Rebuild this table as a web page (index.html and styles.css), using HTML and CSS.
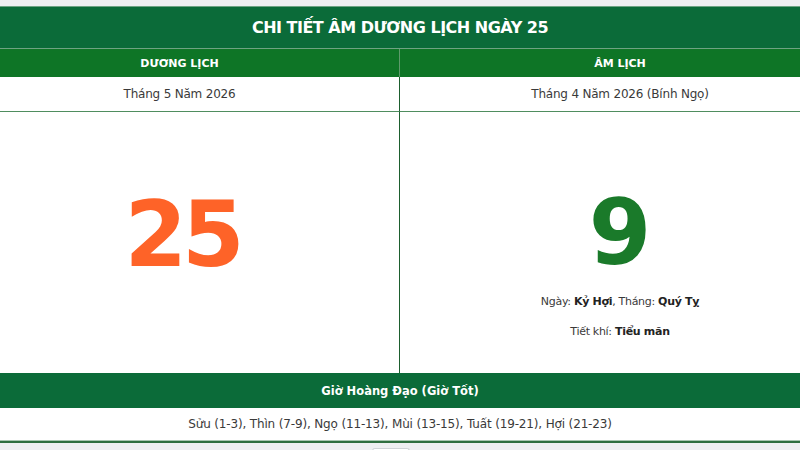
FILE: index.html
```html
<!DOCTYPE html>
<html lang="vi">
<head>
<meta charset="utf-8">
<title>Chi tiết âm dương lịch ngày 25</title>
<link rel="stylesheet" href="styles.css">
</head>
<body>
<div class="page">
  <div class="card">
    <div class="title">CHI TIẾT ÂM DƯƠNG LỊCH NGÀY 25</div>
    <div class="grid">
      <div class="head left">DƯƠNG LỊCH</div>
      <div class="head right">ÂM LỊCH</div>
      <div class="month left">Tháng 5 Năm 2026</div>
      <div class="month right">Tháng 4 Năm 2026 (Bính Ngọ)</div>
      <div class="day left">
        <div class="num solar">25</div>
      </div>
      <div class="day right">
        <div class="num lunar">9</div>
        <div class="info">Ngày: <b>Kỷ Hợi</b>, Tháng: <b>Quý Tỵ</b></div>
        <div class="info">Tiết khí: <b>Tiểu mãn</b></div>
      </div>
    </div>
    <div class="band">Giờ Hoàng Đạo (Giờ Tốt)</div>
    <div class="hours">Sửu (1-3), Thìn (7-9), Ngọ (11-13), Mùi (13-15), Tuất (19-21), Hợi (21-23)</div>
  </div>
  <div class="foot"><span class="btn"></span></div>
</div>
</body>
</html>
```
FILE: styles.css
```css
* { box-sizing: border-box; }
html, body { margin: 0; padding: 0; }
body {
  background: #eeeff1;
  font-family: "DejaVu Sans", Verdana, sans-serif;
  color: #333;
  width: 800px;
  height: 450px;
  overflow: hidden;
}
.page { padding-top: 6px; }
.card { background: #fff; border-bottom: 2px solid #2f6e3f; }
.title {
  height: 43px;
  background: #0b6b39;
  border-top: 1px solid #6ea383;
  border-bottom: 1px solid #6ea383;
  color: #fff;
  font-weight: bold;
  font-size: 16px;
  display: flex;
  align-items: center;
  justify-content: center;
  letter-spacing: -0.5px;
}
.grid {
  display: grid;
  grid-template-columns: 400px 400px;
}
.left { padding-right: 40px; }
.right { padding-left: 40px; }
.head {
  height: 28px;
  background: #0e7526;
  color: #fff;
  font-weight: bold;
  font-size: 11px;
  display: flex;
  align-items: center;
  justify-content: center;
}
.head.left { border-right: 1px solid #5f9a6c; }
.month {
  height: 35px;
  font-size: 12px;
  letter-spacing: -0.2px;
  display: flex;
  align-items: center;
  justify-content: center;
  border-bottom: 1px solid #4f8d5f;
  color: #3a3a3a;
}
.month.left { border-right: 1px solid #1d5e2e; }
.day {
  height: 261px;
  display: flex;
  flex-direction: column;
  align-items: center;
}
.day.left { border-right: 1px solid #1d5e2e; }
.num {
  font-weight: bold;
  font-size: 90px;
  line-height: 1;
  margin-top: 78px;
}
.solar { color: #fe6328; letter-spacing: -5px; margin-right: -5px; }
.lunar { color: #1a7a2a; margin-top: 76px; }
.info {
  font-size: 11px;
  letter-spacing: -0.3px;
  color: #3a3a3a;
  margin-top: 17px;
}
.info + .info { margin-top: 17px; }
.info b { color: #222; }
.band {
  height: 35px;
  background: #0b6b39;
  color: #fff;
  font-weight: bold;
  font-size: 11.5px;
  display: flex;
  align-items: center;
  justify-content: center;
}
.hours {
  height: 33px;
  font-size: 12px;
  letter-spacing: -0.15px;
  display: flex;
  align-items: center;
  justify-content: center;
  color: #3a3a3a;
  border-bottom: 1px solid #a9c6b1;
}
.foot { display: flex; justify-content: center; padding-top: 5px; }
.btn {
  display: block;
  width: 38px;
  height: 10px;
  margin-left: -18px;
  background: #fff;
  border: 1px solid #cfd3d6;
  border-bottom: none;
  border-radius: 3px 3px 0 0;
}
```
